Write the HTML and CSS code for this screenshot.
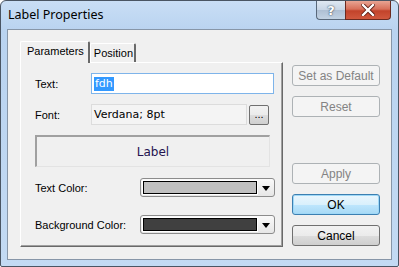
FILE: index.html
```html
<!DOCTYPE html>
<html lang="en">
<head>
  <title>Label Properties</title>
  <link rel="stylesheet" href="styles.css">
</head>
<body>
  <div class="window">
    <div class="titlebar">
      <span class="title">Label Properties</span>
      <div class="caption-buttons">
        <div class="cap-btn help">?</div>
        <div class="cap-btn close">
          <svg width="14" height="12" viewBox="0 0 14 12">
            <path d="M2 1 L12 11 M12 1 L2 11" stroke="#5a1a10" stroke-width="4" stroke-linecap="square"/>
            <path d="M2 1 L12 11 M12 1 L2 11" stroke="#ffffff" stroke-width="2.4" stroke-linecap="square"/>
          </svg>
        </div>
      </div>
    </div>
    <div class="client">
      <div class="tab-area">
        <div class="tabs">
          <div class="tab active">Parameters</div>
          <div class="tab">Position</div>
        </div>
        <div class="panel">
          <div class="row">
            <span class="lbl">Text:</span>
            <div class="textbox"><span class="sel">fdh</span></div>
          </div>
          <div class="row">
            <span class="lbl">Font:</span>
            <div class="fontbox">Verdana; 8pt</div>
            <div class="dots">...</div>
          </div>
          <div class="preview">Label</div>
          <div class="row color-row">
            <span class="lbl wide">Text Color:</span>
            <div class="combo">
              <div class="swatch light"></div>
              <span class="arrow"></span>
            </div>
          </div>
          <div class="row color-row">
            <span class="lbl wide">Background Color:</span>
            <div class="combo">
              <div class="swatch dark"></div>
              <span class="arrow"></span>
            </div>
          </div>
        </div>
      </div>
      <div class="side">
        <button class="btn disabled">Set as Default</button>
        <button class="btn disabled">Reset</button>
        <div class="spacer"></div>
        <button class="btn disabled">Apply</button>
        <button class="btn default">OK</button>
        <button class="btn">Cancel</button>
      </div>
    </div>
  </div>
</body>
</html>
```

FILE: styles.css
```css
body {
  margin: 0;
  background: #ffffff;
}
.window {
  width: 399px;
  height: 267px;
  box-sizing: border-box;
  border: 1px solid #4a5563;
  border-radius: 6px 6px 2px 2px;
  background: linear-gradient(#c9def5, #b9d3f0 30px, #c3daf3);
  padding: 0 6px 6px 6px;
  display: flex;
  flex-direction: column;
}
.titlebar {
  height: 28px;
  display: flex;
  justify-content: space-between;
  align-items: flex-start;
}
.title {
  font-family: "Noto Sans", sans-serif;
  font-size: 12.5px;
  color: #000;
  margin: 5px 0 0 1px;
}
.caption-buttons {
  display: flex;
  margin-right: 1px;
}
.cap-btn {
  height: 18px;
  border: 1px solid #59687a;
  border-top: none;
  display: flex;
  align-items: center;
  justify-content: center;
}
.help {
  width: 28px;
  border-radius: 0 0 0 4px;
  border-right: none;
  background: linear-gradient(#dfe8f2, #c7d5e5 50%, #aebfd3 51%, #c2d2e3);
  font-family: "DejaVu Sans", sans-serif;
  font-weight: bold;
  font-size: 13px;
  color: #fff;
  text-shadow: 0 0 2px #3d4d60, 0 0 1px #3d4d60;
}
.close {
  width: 44px;
  border-radius: 0 0 4px 0;
  border-color: #6b2a1f;
  background: linear-gradient(#e8a493, #d7705a 45%, #c2432b 55%, #d0583e);
}
.client {
  flex: 1;
  border: 1px solid #8796a8;
  background: #f0f0f0;
  display: flex;
  padding: 11px 0 0 12px;
  font-family: "Liberation Sans", sans-serif;
  font-size: 11px;
  color: #000;
}
.tab-area {
  width: 263px;
  display: flex;
  flex-direction: column;
}
.tabs {
  display: flex;
  height: 21px;
  align-items: flex-end;
  position: relative;
  z-index: 1;
}
.tab {
  height: 18px;
  padding: 0 1px 0 3px;
  line-height: 18px;
  background: #f0f0f0;
  border-left: 1px solid #fff;
  border-top: 1px solid #fff;
  border-right: 2px solid #696969;
  border-radius: 2px 2px 0 0;
  font-size: 11px;
}
.tab.active {
  height: 21px;
  line-height: 19px;
  padding: 0 4px 0 6px;
  margin-bottom: -1px;
}
.panel {
  height: 185px;
  box-sizing: border-box;
  border-left: 1px solid #fff;
  border-top: 1px solid #fff;
  border-right: 1px solid #696969;
  border-bottom: 1px solid #696969;
  box-shadow: inset -1px -1px 0 #a0a0a0;
  padding: 10px 0 0 14px;
  display: flex;
  flex-direction: column;
}
.row {
  display: flex;
  align-items: center;
  height: 21px;
  margin-bottom: 10px;
  flex-shrink: 0;
}
.lbl {
  width: 56px;
}
.lbl.wide {
  width: 105px;
}
.textbox {
  width: 179px;
  height: 19px;
  border: 1px solid #7eb4ea;
  background: #fff;
  display: flex;
  align-items: center;
  padding-left: 2px;
}
.sel {
  background: #3399ff;
  color: #fff;
  font-family: "DejaVu Sans", sans-serif;
  font-size: 11px;
  line-height: 14px;
  padding: 0 1px;
}
.fontbox {
  width: 152px;
  height: 19px;
  border: 1px solid #dcdcdc;
  background: #f4f4f4;
  display: flex;
  align-items: center;
  padding-left: 2px;
  font-family: "DejaVu Sans", sans-serif;
  font-size: 11px;
}
.dots {
  width: 18px;
  height: 18px;
  margin-left: 2px;
  border: 1px solid #707070;
  border-radius: 2px;
  background: linear-gradient(#f2f2f2, #ebebeb 50%, #dddddd 51%, #cfcfcf);
  text-align: center;
  line-height: 16px;
  font-size: 11px;
}
.preview {
  flex-shrink: 0;
  width: 232px;
  height: 29px;
  border-top: 2px solid #a0a0a0;
  border-left: 2px solid #a0a0a0;
  border-right: 1px solid #e3e3e3;
  border-bottom: 1px solid #e3e3e3;
  display: flex;
  align-items: center;
  justify-content: center;
  font-family: "DejaVu Sans", sans-serif;
  font-size: 12px;
  color: #24134f;
  margin-bottom: 11px;
}
.color-row {
  height: 19px;
  margin-bottom: 18px;
}
.combo {
  width: 129px;
  height: 17px;
  border: 1px solid #8c8c8c;
  border-radius: 3px;
  background: linear-gradient(#fafafa, #e6e6e6);
  display: flex;
  align-items: center;
  padding: 0 2px;
}
.swatch {
  flex: 1;
  height: 11px;
  border: 1px solid #000;
  outline: 1px solid #fff;
}
.swatch.light {
  background: #c0c0c0;
}
.swatch.dark {
  background: #404040;
}
.arrow {
  width: 0;
  height: 0;
  border-left: 4px solid transparent;
  border-right: 4px solid transparent;
  border-top: 5px solid #000;
  margin: 1px 2px 0 5px;
}
.side {
  width: 88px;
  margin-left: 9px;
  padding-top: 24px;
  display: flex;
  flex-direction: column;
}
.btn {
  height: 21px;
  width: 88px;
  margin-bottom: 10px;
  border: 1px solid #707070;
  border-radius: 3px;
  background: linear-gradient(#f2f2f2, #ebebeb 50%, #dddddd 51%, #cfcfcf);
  font-family: "Liberation Sans", sans-serif;
  font-size: 12px;
  color: #000;
  padding: 0;
}
.btn.disabled {
  border-color: #adb2b5;
  background: #f4f4f4;
  color: #838383;
}
.btn.default {
  border-color: #3c7fb1;
  background: linear-gradient(#eaf6fd, #d9f0fc 50%, #bee6fd 51%, #a7d9f5);
  box-shadow: inset 0 0 0 1px #9fd8f7;
}
.spacer {
  height: 36px;
}
```
